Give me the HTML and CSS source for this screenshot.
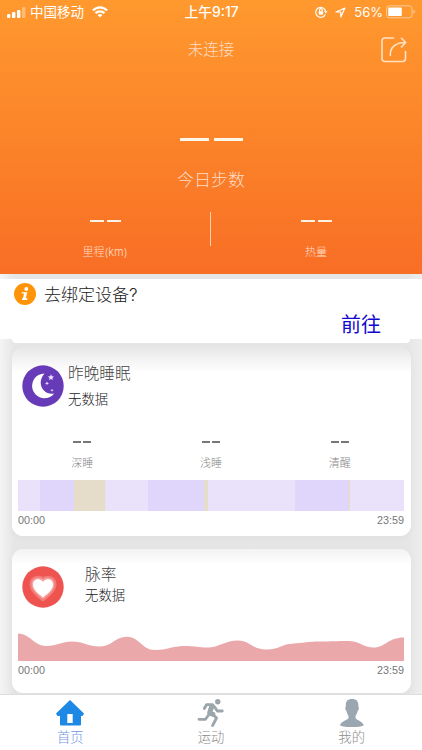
FILE: index.html
```html
<!DOCTYPE html>
<html lang="zh-CN">
<head>
<meta charset="utf-8">
<title>首页</title>
<link rel="stylesheet" href="styles.css">
</head>
<body>
<div class="app">
  <section class="hero">
    <div class="status">
      <div class="status-left">
        <svg width="19" height="11" viewBox="0 0 19 11" fill="#fff"><rect y="7" width="3.4" height="4" rx="1"/><rect x="5" y="5" width="3.4" height="6" rx="1"/><rect x="10" y="3" width="3.4" height="8" rx="1"/><rect x="15" width="3.4" height="11" rx="1" opacity=".35"/></svg>
        <span class="carrier">中国移动</span>
        <svg class="wifi" width="16" height="12" viewBox="0 0 16 12" fill="none" stroke="#fff" stroke-width="2.200"><path d="M.9 4.6C5 .2 11 .2 15.100 4.600M3.500 7.300C6 4.700 10 4.700 12.500 7.300"/><path d="M5.600 9C7 7.600 9 7.600 10.400 9L8 11.600Z" fill="#fff" stroke="none"/></svg>
      </div>
      <div class="clock">上午9:17</div>
      <div class="status-right">
        <svg width="13" height="12" viewBox="0 0 13 12" fill="none" stroke="#fff" stroke-width="1.200"><path d="M10.300 8.500A5 5 0 1 1 10.600 5"/><path d="M8.900 5.300H12.600L10.800 7.600Z" fill="#fff" stroke="none"/><rect x="3.700" y="5.200" width="4.400" height="3.400" fill="#fff" stroke="none"/><path d="M4.600 5.300V4a1.300 1.300 0 0 1 2.600 0V5.300"/></svg>
        <svg class="loc" width="11" height="11" viewBox="0 0 11 11" fill="none" stroke="#fff" stroke-width="1.200" stroke-linejoin="round"><path d="M10 1L1 5H5.800V10Z"/></svg>
        <span class="percent">56%</span>
        <svg width="30" height="14" viewBox="0 0 30 14"><rect x=".6" y=".8" width="25.500" height="12" rx="3" fill="none" stroke="#fff" stroke-opacity=".5"/><rect x="2.200" y="2.500" width="13.600" height="8.600" rx="1" fill="#fff"/><path d="M27.500 4.700Q30.500 6.800 27.500 8.900Z" fill="#fff" opacity=".5"/></svg>
      </div>
    </div>
    <div class="connect">未连接
      <svg class="share" width="26" height="26" viewBox="0 0 26 26" fill="none" stroke="#ffe1c4" stroke-width="1.600" stroke-linecap="round" stroke-linejoin="round"><path d="M12.500 1H4Q1 1 1 4V21.500Q1 24.500 4 24.500H21.500Q24.500 24.500 24.500 21.500V14.500"/><path d="M9.300 18.500C9 11 14 5.500 24 5.500M20.500 1.300L24.700 5.500L20.500 9.900"/></svg>
    </div>
    <div class="dash dash-big"><i></i><i></i></div>
    <div class="steps">今日步数</div>
    <div class="metrics">
      <div class="metric"><div class="dash"><i></i><i></i></div><span>里程(km)</span></div>
      <div class="rule"></div>
      <div class="metric"><div class="dash"><i></i><i></i></div><span>热量</span></div>
    </div>
  </section>

  <main class="content">
    <section class="notice">
      <div class="notice-head">
        <svg width="22" height="22" viewBox="0 0 22 22"><circle cx="11" cy="11" r="11" fill="#ff9408"/><circle cx="12.300" cy="6" r="1.900" fill="#fff"/><path d="M8 9.200H13.300L11.800 15.200H13.500L13 16.900H7.900L8.300 15.300H9L10.100 10.600H7.600Z" fill="#fff"/></svg>
        <span>去绑定设备?</span>
      </div>
      <div class="go">前往</div>
    </section>
    <div class="notice-foot"></div>

    <section class="card sleep">
      <div class="card-head">
        <svg class="badge" width="42" height="42" viewBox="0 0 42 42"><circle cx="21" cy="21" r="20.700" fill="#673ab7"/><path d="M22.500 8.500A12.400 12.400 0 1 0 32.300 28.500C22 30.500 13.500 19 22.500 8.500Z" fill="#fff"/><g fill="#e9dcff"><path d="M29 9.200l.9 2 2.200.2-1.700 1.500.5 2.200-1.900-1.100-2 1.100.5-2.200-1.700-1.500 2.200-.2z"/><path d="M25 16.500l.6 1.300 1.400.6-1.400.6-.6 1.300-.6-1.300-1.400-.6 1.400-.6z"/><path d="M30 23.700l.5 1 1.200.5-1.200.5-.5 1-.5-1-1.200-.5 1.200-.5z"/></g></svg>
        <div class="titles"><h2>昨晚睡眠</h2><p>无数据</p></div>
      </div>
      <div class="stats">
        <div><div class="dash dash-dark"><i></i><i></i></div><span>深睡</span></div>
        <div><div class="dash dash-dark"><i></i><i></i></div><span>浅睡</span></div>
        <div><div class="dash dash-dark"><i></i><i></i></div><span>清醒</span></div>
      </div>
      <svg class="band" width="386" height="31" viewBox="0 0 386 31"><rect width="386" height="31" fill="#eae2fb"/><path d="M22 0H56V31H22ZM130 0H186V31H130ZM277 0H331V31H277Z" fill="#e0d5fb"/><path d="M56 0H87.300V31H56ZM186 0H190V31H186ZM330.500 0H332V31H330.500Z" fill="#e6dcca"/></svg>
      <div class="times"><span>00:00</span><span>23:59</span></div>
    </section>

    <section class="card pulse">
      <div class="card-head">
        <svg class="badge" width="42" height="42" viewBox="0 0 42 42"><circle cx="21" cy="21" r="20.700" fill="#ee5350"/><g stroke-linejoin="round"><path d="M21 31.500C18 28.500 11 24.500 11 18.500C11 13 18 11.500 21 16C24 11.500 31 13 31 18.500C31 24.500 24 28.500 21 31.500Z" fill="#f27b78" stroke="#f27b78" stroke-width="7"/><path d="M21 31.500C18 28.500 11 24.500 11 18.500C11 13 18 11.500 21 16C24 11.500 31 13 31 18.500C31 24.500 24 28.500 21 31.500Z" fill="#fff" stroke="#f7a3a1" stroke-width="3"/><path d="M21 31.500C18 28.500 11 24.500 11 18.500C11 13 18 11.500 21 16C24 11.500 31 13 31 18.500C31 24.500 24 28.500 21 31.500Z" fill="#fff"/></g></svg>
        <div class="titles"><h2>脉率</h2><p>无数据</p></div>
      </div>
      <svg class="wave" width="386" height="29" viewBox="0 0 386 29"><path d="M0 1.500C12 1.500 16 14 28 14S43 9.500 54 9.500S70 14.500 82 14.500S97 4.800 109 4.800S124 18 137 18S154 14 166 14S180 15.500 190 15.500S208 8.500 220 8.500S234 17.500 248 17.500S262 12.500 274 11.700S290 9.500 302 9.500S318 9 330 9S345 15.500 356 15.500S370 5.500 386 5.500V29H0Z" fill="#eba8ab"/></svg>
      <div class="times"><span>00:00</span><span>23:59</span></div>
    </section>
  </main>

  <nav class="tabs">
    <div class="tab active"><svg width="28" height="28" viewBox="0 0 28 28"><path d="M14 1L28 14.500L26.500 17H25V25.500Q25 26.500 24 26.500H5Q4 26.500 4 25.500V17H1.500L0 14.500ZM11.300 15V24H16.700V15Z" fill="#1e88e5" fill-rule="evenodd"/></svg><span>首页</span></div>
    <div class="tab"><svg width="28" height="28" viewBox="0 0 28 28" fill="none" stroke="#9aa5ac" stroke-width="2.800" stroke-linecap="round" stroke-linejoin="round"><circle cx="20.800" cy="2.700" r="2.700" fill="#9aa5ac" stroke="none"/><path d="M7.300 9.500L9.500 5.700H15.500L18.500 9.200L20.300 12H25.300M2 20.300H8.500L11.200 16.500M16 15.500L19.500 19L15.600 26.500"/><path d="M14.800 7.200L12.600 14L15.800 15.300" stroke-width="5"/></svg><span>运动</span></div>
    <div class="tab"><svg width="28" height="28" viewBox="0 0 28 28"><path d="M14 0C18.500 0 20.800 2.500 20.300 7.500C21.300 8 20.800 11 19.700 12C19 15 17.500 16 17.400 18C17.300 21.500 25 22 25.700 26.500C20 28.800 8 28.800 2 26.500C2.500 22 10.800 21.500 10.700 18C10.500 16 9 15 8.500 12C7.200 11 6.800 8 7.900 7.500C7.300 3 9 0 14 0Z" fill="#9aa7b0"/></svg><span>我的</span></div>
  </nav>
</div>
</body>
</html>
```
FILE: styles.css
```css
* { box-sizing: border-box; margin: 0; padding: 0; }
body { font-family: Inter, "Noto Sans CJK SC", sans-serif; font-weight: 300; }
svg { display: block; flex: none; }
.app { width: 422px; height: 750px; display: flex; flex-direction: column; overflow: hidden; background: #e7e7e7; }

.hero { height: 274px; flex: none; background: linear-gradient(#ff992e, #f86e25); color: #ffdcc5; }
.status { height: 24px; padding: 0 6px 0 7px; display: grid; grid-template-columns: 1fr auto 1fr; align-items: center; color: #fff; font-size: 13px; font-weight: 400; }
.status-left, .status-right { display: flex; align-items: center; }
.status-right { justify-content: flex-end; }
.carrier { margin-left: 4px; font-size: 13.5px; line-height: 20px; }
.wifi { margin-left: 8px; }
.clock { font-weight: 500; font-size: 13.8px; line-height: 20px; }
.loc { margin-left: 7px; }
.percent { margin: 0 3px 0 8px; font-size: 13px; }
.connect { position: relative; height: 52px; line-height: 52px; text-align: center; font-size: 15.5px; }
.share { position: absolute; left: 381px; top: 13px; }

.dash { display: flex; justify-content: center; gap: 3px; }
.dash i { width: 14px; height: 2px; background: #fff1e4; }
.dash-big { padding-top: 62px; gap: 5px; }
.dash-big i { width: 29px; height: 3px; background: #fff6ea; }
.dash-dark { gap: 2px; }
.dash-dark i { width: 8px; height: 1.5px; background: #777; }
.steps { margin-top: 26px; height: 26px; line-height: 26px; text-align: center; font-size: 17px; }
.metrics { margin-top: 19px; padding-right: 1px; display: flex; }
.metric { flex: 1; padding-top: 8px; display: flex; flex-direction: column; align-items: center; font-size: 11px; line-height: 16px; }
.metric span { margin-top: 22px; }
.rule { width: 1px; height: 34px; background: #ffd0b4; }

.content { flex: 1; padding-top: 5px; background: linear-gradient(90deg, #f4f4f4, #e6e6e6 14px, #e6e6e6 408px, #eee); }
.notice { height: 60px; background: #fff; color: #222; }
.notice-head { padding: 3px 0 0 14px; display: flex; align-items: center; gap: 8px; height: 26px; font-size: 17px; }
.go { margin-right: 41px; line-height: 41px; text-align: right; color: #1207cf; font-size: 20px; font-weight: 400; }
.notice-foot { height: 4px; margin: 0 12px; background: #fff; border-radius: 0 0 10px 10px; }

.card { margin: 0 11px 0 12px; padding: 0 7px 0 6px; border-radius: 11px; box-shadow: 0 2px 9px rgba(0, 0, 0, .03); }
.sleep { height: 189px; margin-top: 4px; padding-top: 10px; background: linear-gradient(#e7e7e7, #fff 25px); margin-bottom: 13px; }
.pulse { height: 144px; padding-top: 12px; background: linear-gradient(#f3f3f3, #fff 16px); }
.card-head { height: 57px; display: flex; }
.badge { margin: 8px 0 0 4px; }
.titles { margin-left: 4px; color: #222; }
h2 { font-size: 15.7px; font-weight: 300; line-height: 26px; color: #444; }
.sleep h2 { padding-top: 4px; }
.titles p { font-size: 13.4px; line-height: 24px; }
.stats { height: 66px; display: grid; grid-template-columns: repeat(3, 1fr); text-align: center; font-size: 11px; color: #888; padding-top: 27px; }
.stats span { display: block; margin-top: 11px; line-height: 18px; }
.times { display: flex; justify-content: space-between; color: #777; font-size: 10.8px; line-height: 18px; font-family: "Liberation Sans", sans-serif; }
.pulse .titles { margin-left: 21px; }
.pulse h2 { line-height: 27px; }
.pulse .titles p { line-height: 15px; }
.pulse .badge { margin-top: 5px; }
.wave { margin-top: 14px; }

.tabs { height: 56px; flex: none; border-top: 1px solid #ddd; background: #fff; display: grid; grid-template-columns: repeat(3, 1fr); color: #8d8d8d; font-size: 13.3px; line-height: 20px; }
.tab { display: flex; flex-direction: column; align-items: center; padding-top: 4px; }
.active { color: #6f95e5; }
```
